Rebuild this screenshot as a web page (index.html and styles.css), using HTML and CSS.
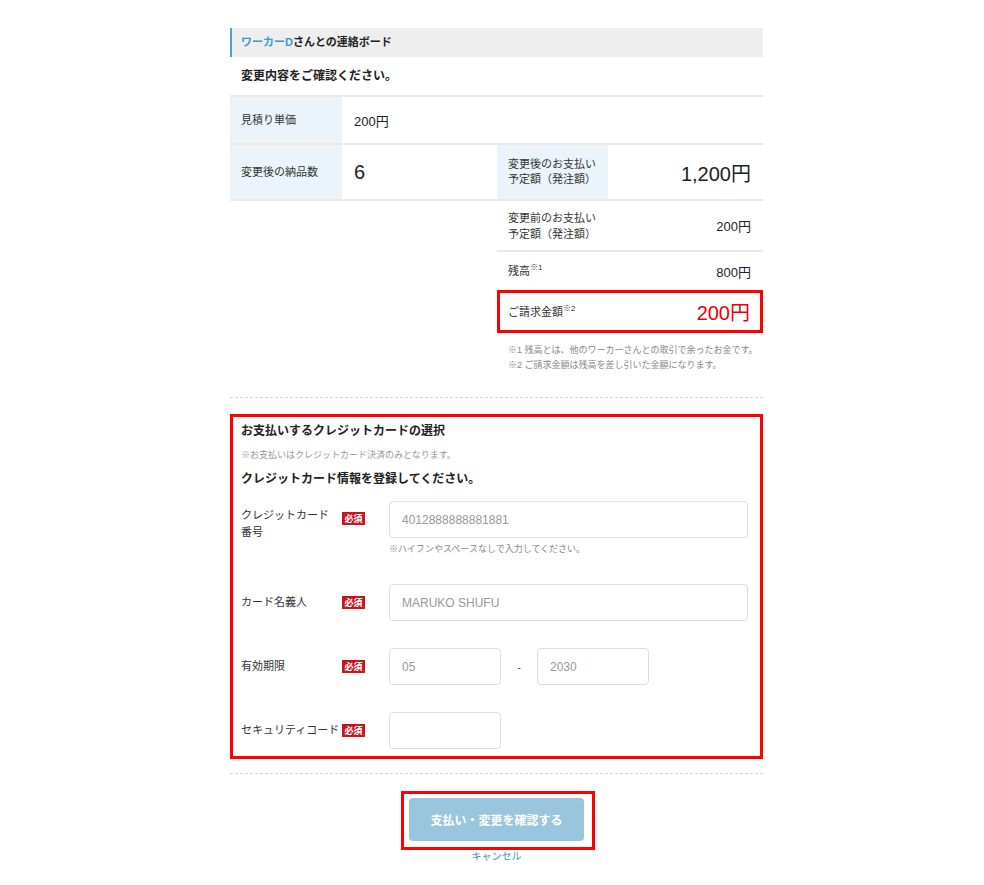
FILE: index.html
```html
<!DOCTYPE html>
<html lang="ja">
<head>
<meta charset="utf-8">
<title>連絡ボード</title>
<link rel="stylesheet" href="styles.css">
</head>
<body>
<div class="page">
  <div class="board-head"><span class="worker">ワーカーD</span>さんとの連絡ボード</div>
  <h2 class="lead">変更内容をご確認ください。</h2>

  <div class="tbl">
    <div class="trow r-unit">
      <div class="th">見積り単価</div>
      <div class="td td-wide">200円</div>
    </div>
    <div class="trow r-qty">
      <div class="th">変更後の納品数</div>
      <div class="td td-qty">6</div>
      <div class="th th-pay">変更後のお支払い<br>予定額（発注額）</div>
      <div class="td td-amt">1,200円</div>
    </div>
  </div>

  <div class="summary">
    <div class="srow s-prev">
      <div class="slbl">変更前のお支払い<br>予定額（発注額）</div>
      <div class="sval">200円</div>
    </div>
    <div class="srow s-bal">
      <div class="slbl">残高<sup>※1</sup></div>
      <div class="sval">800円</div>
    </div>
    <div class="srow s-total">
      <div class="slbl">ご請求金額<sup>※2</sup></div>
      <div class="sval sval-red">200円</div>
    </div>
    <p class="notes">※1 残高とは、他のワーカーさんとの取引で余ったお金です。<br>※2 ご請求金額は残高を差し引いた金額になります。</p>
  </div>

  <hr class="dash">

  <section class="card-box">
    <h3 class="card-title">お支払いするクレジットカードの選択</h3>
    <p class="pay-note">※お支払いはクレジットカード決済のみとなります。</p>
    <h4 class="card-sub">クレジットカード情報を登録してください。</h4>

    <div class="form">
      <div class="frow frow-top">
        <div class="flabel">クレジットカード<br>番号</div>
        <span class="badge">必須</span>
        <div class="fctrl">
          <input class="inp" type="text" placeholder="4012888888881881">
          <p class="hint">※ハイフンやスペースなしで入力してください。</p>
        </div>
      </div>
      <div class="frow">
        <div class="flabel">カード名義人</div>
        <span class="badge">必須</span>
        <div class="fctrl"><input class="inp" type="text" placeholder="MARUKO SHUFU"></div>
      </div>
      <div class="frow">
        <div class="flabel">有効期限</div>
        <span class="badge">必須</span>
        <div class="fctrl exp">
          <input class="inp inp-s" type="text" placeholder="05">
          <span class="exp-sep">-</span>
          <input class="inp inp-s" type="text" placeholder="2030">
        </div>
      </div>
      <div class="frow">
        <div class="flabel">セキュリティコード</div>
        <span class="badge">必須</span>
        <div class="fctrl"><input class="inp inp-s" type="text"></div>
      </div>
    </div>
  </section>

  <hr class="dash dash-2">

  <div class="actions">
    <div class="btn-frame"><button class="btn" type="button">支払い・変更を確認する</button></div>
    <a class="cancel" href="#">キャンセル</a>
  </div>
</div>
</body>
</html>
```

FILE: styles.css
```css
body {
  margin: 0;
  background: #fff;
  color: #222;
  font-family: "Liberation Sans", "Noto Sans CJK JP", sans-serif;
}

.page {
  width: 533px;
  margin: 28px 0 0 230px;
}

.board-head {
  height: 29px;
  line-height: 29px;
  background: #eeeeee;
  border-left: 2px solid #4ea3cc;
  padding-left: 9px;
  font-size: 11px;
  font-weight: bold;
  color: #222;
}

.worker {
  color: #3a9acb;
}

.lead {
  margin: 0;
  height: 38px;
  line-height: 38px;
  padding-left: 11px;
  font-size: 12px;
  font-weight: bold;
}

.trow {
  display: flex;
  border-top: 2px solid #e9e9e9;
}

.r-unit {
  height: 46px;
}

.r-qty {
  height: 54px;
  border-bottom: 2px solid #e9e9e9;
}

.th {
  width: 112px;
  box-sizing: border-box;
  padding-left: 11px;
  display: flex;
  align-items: center;
  background: #ebf4fa;
  font-size: 11px;
  line-height: 15px;
  color: #333;
}

.td {
  display: flex;
  align-items: center;
  box-sizing: border-box;
  padding-left: 12px;
  font-size: 13px;
}

.td-wide {
  flex: 1;
}

.td-qty {
  width: 155px;
  font-size: 20px;
}

.th-pay {
  width: 111px;
}

.td-amt {
  flex: 1;
  justify-content: flex-end;
  padding-right: 12px;
  font-size: 20px;
}

.summary {
  margin-left: 267px;
}

.srow {
  display: flex;
  justify-content: space-between;
  align-items: center;
  padding: 0 12px 0 11px;
}

.s-prev {
  height: 49px;
  border-bottom: 2px solid #e9e9e9;
}

.s-bal {
  height: 38px;
}

.s-total {
  height: 37px;
  border: 3px solid #ff0000;
  padding: 0 10px 0 8px;
}

.slbl {
  font-size: 11px;
  line-height: 16px;
  color: #333;
}

.slbl sup {
  font-size: 8px;
  line-height: 0;
}

.sval {
  font-size: 13px;
}

.sval-red {
  font-size: 20px;
  color: #ee0000;
}

.notes {
  margin: 10px 0 0;
  padding-left: 11px;
  font-size: 9px;
  line-height: 15px;
  color: #888;
}

.dash {
  margin: 24px 0 0;
  border: 0;
  border-top: 1px dashed #d6d6d6;
  height: 0;
}

.card-box {
  margin-top: 16px;
  border: 3px solid #ff0000;
  padding: 6px 12px 7px 8px;
}

.card-title {
  margin: 0;
  font-size: 12px;
  line-height: 16px;
  font-weight: bold;
}

.pay-note {
  margin: 9px 0 0;
  font-size: 9px;
  line-height: 14px;
  color: #999;
}

.card-sub {
  margin: 9px 0 0;
  font-size: 12px;
  line-height: 16px;
  font-weight: bold;
}

.form {
  margin-top: 14px;
  display: flex;
  flex-direction: column;
  gap: 27px;
}

.frow {
  display: grid;
  grid-template-columns: 101px 47px 1fr;
  align-items: center;
}

.frow-top {
  align-items: start;
}

.flabel {
  font-size: 11px;
  line-height: 17px;
  color: #333;
}

.frow-top .flabel {
  padding-top: 6px;
}

.frow-top .badge {
  margin-top: 11px;
}

.badge {
  justify-self: start;
  width: 23px;
  height: 13px;
  line-height: 13px;
  text-align: center;
  background: #c8161d;
  color: #fff;
  font-size: 9px;
  font-weight: bold;
  font-family: "Noto Sans CJK JP", sans-serif;
}

.inp {
  display: block;
  box-sizing: border-box;
  width: 100%;
  height: 37px;
  margin: 0;
  padding: 0 12px;
  border: 1px solid #dddddd;
  border-radius: 4px;
  background: #fff;
  font-family: "Liberation Sans", "Noto Sans CJK JP", sans-serif;
  font-size: 12px;
  color: #999;
  outline: none;
}

.inp::placeholder {
  color: #999;
}

.inp-s {
  width: 112px;
}

.hint {
  margin: 4px 0 1px;
  font-size: 9px;
  line-height: 14px;
  color: #888;
}

.exp {
  display: flex;
  align-items: center;
}

.exp-sep {
  width: 36px;
  text-align: center;
  font-size: 11px;
  color: #555;
}

.dash-2 {
  margin-top: 14px;
}

.actions {
  margin-top: 17px;
  text-align: center;
}

.btn-frame {
  display: inline-block;
  margin-left: 3px;
  border: 3px solid #ff0000;
  padding: 4px 8px 6px 5px;
  vertical-align: top;
}

.btn {
  display: block;
  width: 175px;
  height: 43px;
  border: 0;
  border-radius: 4px;
  background: #99c6dc;
  color: #fff;
  font-family: "Noto Sans CJK JP", sans-serif;
  font-size: 12px;
  font-weight: bold;
  cursor: pointer;
}

.cancel {
  display: block;
  font-size: 10px;
  line-height: 14px;
  color: #3d8fc4;
  text-decoration: none;
}
```
